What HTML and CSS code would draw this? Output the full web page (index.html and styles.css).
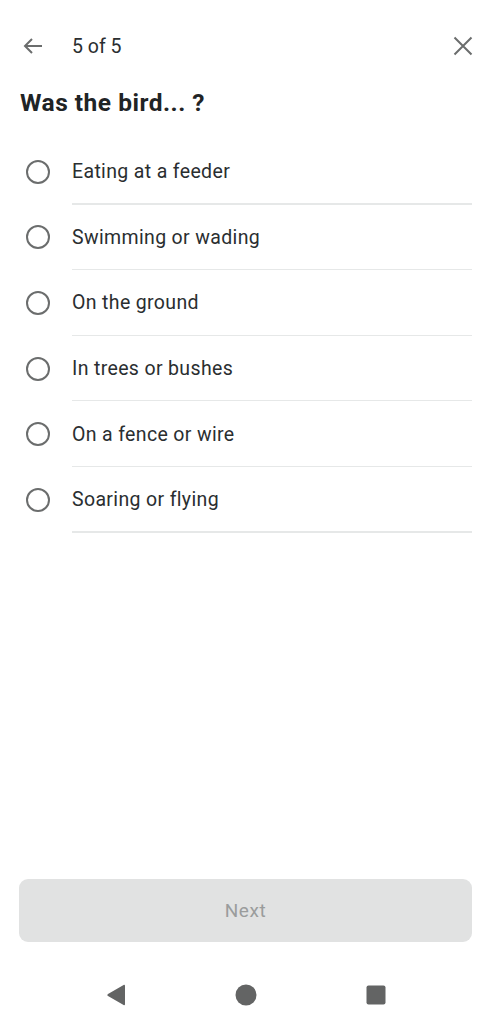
FILE: index.html
```html
<!DOCTYPE html>
<html>
<head>
<meta charset="utf-8">
<link rel="stylesheet" href="styles.css">
</head>
<body>
<div class="page">
  <header class="topbar">
    <div class="back">
      <svg width="24" height="24" viewBox="0 0 24 24"><path d="M21 12H4.5M11 5L4 12l7 7" fill="none" stroke="#6b6d6d" stroke-width="2"/></svg>
    </div>
    <div class="count">5 of 5</div>
    <div class="close">
      <svg width="24" height="24" viewBox="0 0 24 24"><path d="M3.5 3.5l17 17M20.5 3.5l-17 17" fill="none" stroke="#6b6d6d" stroke-width="2"/></svg>
    </div>
  </header>
  <h1 class="title">Was the bird... ?</h1>
  <ul class="options">
    <li class="option"><span class="radio"></span><span class="label">Eating at a feeder</span></li>
    <li class="option"><span class="radio"></span><span class="label">Swimming or wading</span></li>
    <li class="option"><span class="radio"></span><span class="label">On the ground</span></li>
    <li class="option"><span class="radio"></span><span class="label">In trees or bushes</span></li>
    <li class="option"><span class="radio"></span><span class="label">On a fence or wire</span></li>
    <li class="option"><span class="radio"></span><span class="label">Soaring or flying</span></li>
  </ul>
  <div class="spacer"></div>
  <div class="footer">
    <button class="next">Next</button>
  </div>
  <nav class="sysnav">
    <svg width="22" height="22" viewBox="0 0 22 22"><path d="M20 1.8v18.4c0 .9-.7 1.2-1.4.7L3 12.1c-.8-.6-.8-1.6 0-2.2L18.6 1.1c.7-.5 1.4-.2 1.4.7z" fill="#636464"/></svg>
    <svg width="22" height="22" viewBox="0 0 22 22"><circle cx="11" cy="11" r="10.5" fill="#636464"/></svg>
    <svg width="22" height="22" viewBox="0 0 22 22"><rect x="1.5" y="1.5" width="19" height="19" rx="2" fill="#636464"/></svg>
  </nav>
</div>
</body>
</html>
```

FILE: styles.css
```css
* { box-sizing: border-box; }
html, body { margin: 0; padding: 0; background: #fff; }
body {
  font-family: Roboto, "Liberation Sans", sans-serif;
  color: #2a2e30;
}
.page {
  height: 1024px;
  display: flex;
  flex-direction: column;
}
.topbar {
  margin-top: 24px;
  height: 44px;
  display: flex;
  align-items: center;
  padding: 0 17px 0 21px;
}
.back, .close {
  width: 24px;
  height: 24px;
  display: flex;
}
.count {
  margin-left: 27px;
  font-size: 19.5px;
  color: #2a2e30;
  flex: 1;
}
.title {
  margin: 20px 0 0 20px;
  font-size: 24.5px;
  line-height: 30px;
  font-weight: 700;
  letter-spacing: 0.5px;
  color: #1f2426;
}
.options {
  list-style: none;
  margin: 21px 0 0 0;
  padding: 0;
}
.option {
  height: 65.6px;
  display: flex;
  align-items: center;
  padding-left: 26px;
  position: relative;
}
.option::after {
  content: "";
  position: absolute;
  left: 72px;
  right: 20px;
  bottom: 0;
  height: 1.2px;
  background: #e6e8e8;
}
.radio {
  width: 24px;
  height: 24px;
  border: 2.2px solid #6b6d6d;
  border-radius: 50%;
  flex: none;
}
.label {
  margin-left: 22px;
  font-size: 19.5px;
  letter-spacing: 0.35px;
  color: #2a2e30;
}
.spacer { flex: 1; }
.footer {
  padding: 0 20px 0 19px;
}
.next {
  width: 100%;
  height: 63px;
  border: none;
  border-radius: 9px;
  background: #e1e2e2;
  color: #9a9c9c;
  font-family: Roboto, "Liberation Sans", sans-serif;
  font-size: 19px;
  letter-spacing: 0.6px;
  display: block;
}
.sysnav {
  height: 82px;
  padding-top: 24px;
  display: flex;
  align-items: center;
  justify-content: center;
  gap: 108px;
}
```
